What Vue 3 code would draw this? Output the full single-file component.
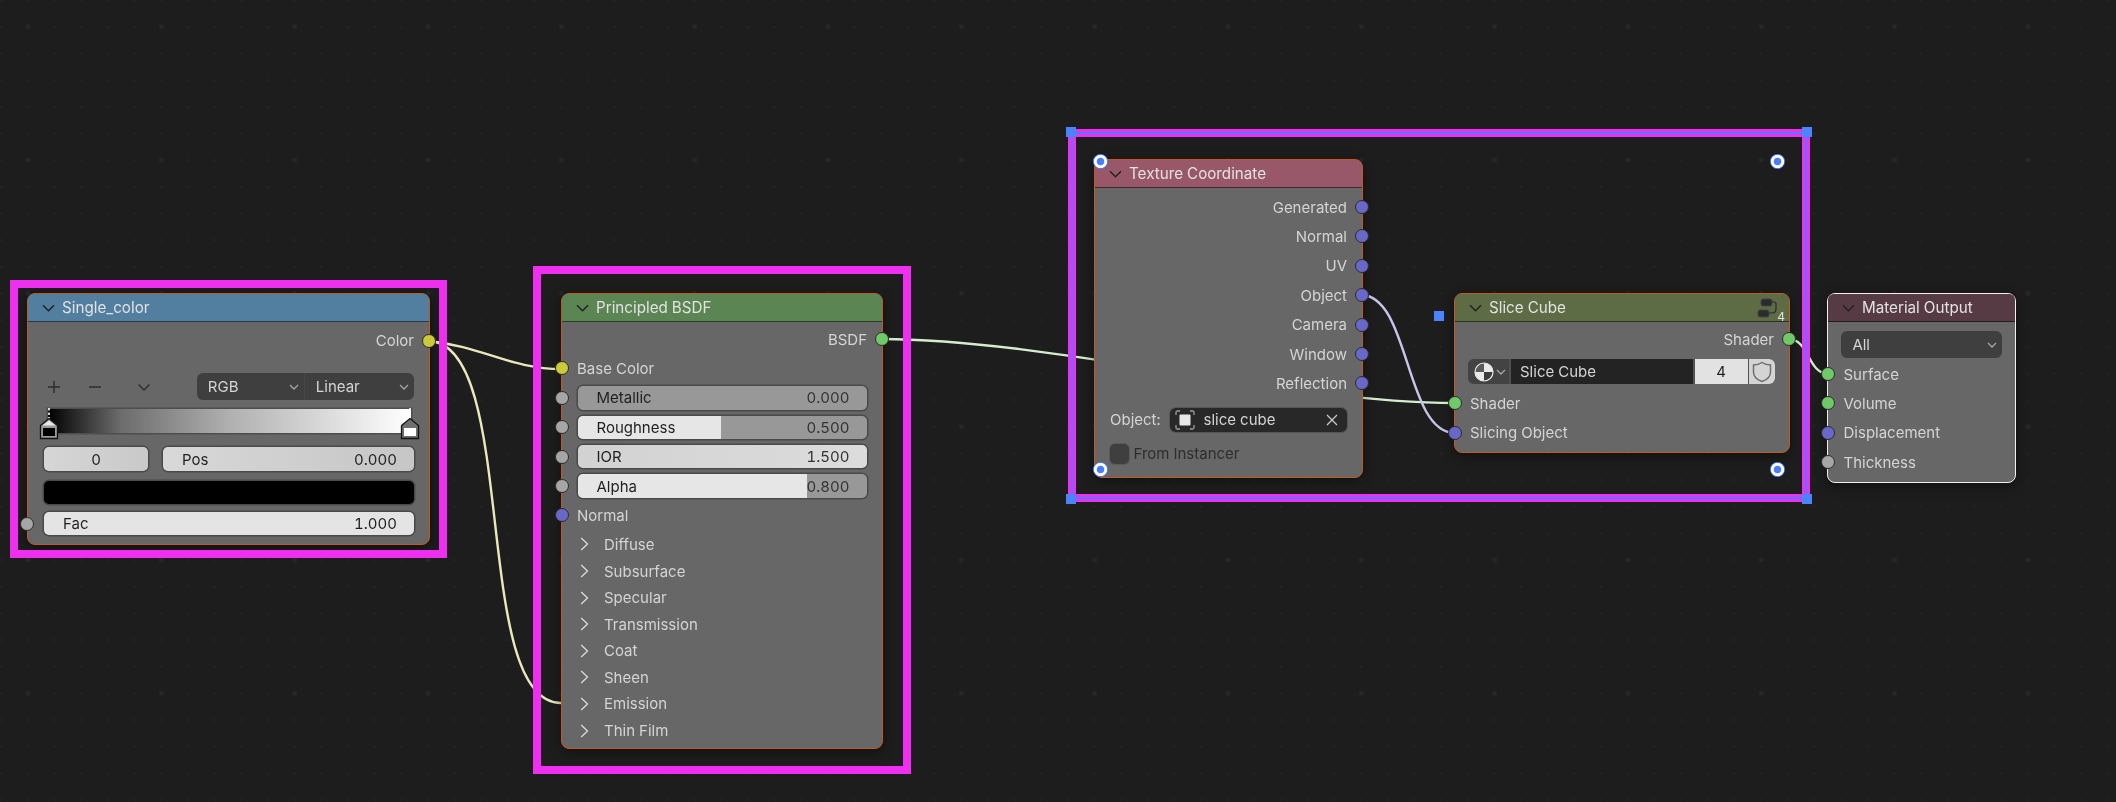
<script setup>
const principledSliders = [
  { label: 'Metallic', value: '0.000', fill: 0, kind: 'slider' },
  { label: 'Roughness', value: '0.500', fill: 49.5, kind: 'slider' },
  { label: 'IOR', value: '1.500', fill: 100, kind: 'solid' },
  { label: 'Alpha', value: '0.800', fill: 79.5, kind: 'slider' },
]
const panels = ['Diffuse', 'Subsurface', 'Specular', 'Transmission', 'Coat', 'Sheen', 'Emission', 'Thin Film']
const texOutputs = ['Generated', 'Normal', 'UV', 'Object', 'Camera', 'Window', 'Reflection']
const outputInputs = [
  { label: 'Surface', type: 'shader' },
  { label: 'Volume', type: 'shader' },
  { label: 'Displacement', type: 'vector' },
  { label: 'Thickness', type: 'value' },
]
</script>

<template>
  <div class="canvas">
    <svg class="links" width="2116" height="802" viewBox="0 0 2116 802" fill="none">
      <path class="link yellow" d="M428 341 C482 346 510 369 562 369" />
      <path class="link yellow" d="M428 341 C520 341 470 703 561 703" />
      <path class="link green" d="M881 339 C1050 339 1290 403 1455 403" />
      <path class="link lilac" d="M1361 295 C1410 295 1405 433 1455 433" />
      <path class="link green" d="M1788 339 C1810 339 1807 374 1829 374" />
    </svg>

    <!-- Single_color -->
    <section class="node n-single">
      <header class="head h-blue">
        <svg class="chev" width="13" height="8" viewBox="0 0 13 8"><path d="M1 1.2 L6.5 6.7 L12 1.2" /></svg>
        <span>Single_color</span>
      </header>
      <div class="body single-body">
        <div class="row out single-color-row">
          <span>Color</span><i class="sock yellow-s right"></i>
        </div>
        <div class="ramp-tools">
          <svg class="tool" width="14" height="14" viewBox="0 0 14 14"><path d="M7 1 V13 M1 7 H13" /></svg>
          <svg class="tool t-minus" width="14" height="14" viewBox="0 0 14 14"><path d="M1 7 H13" /></svg>
          <svg class="tool t-chev" width="14" height="14" viewBox="0 0 14 14"><path d="M1.5 4.5 L7 10 L12.5 4.5" /></svg>
          <div class="combo">
            <div class="combo-cell c-rgb"><span>RGB</span><svg class="mini" width="10" height="6" viewBox="0 0 10 6"><path d="M1 1 L5 5 L9 1" /></svg></div>
            <div class="combo-cell c-lin"><span>Linear</span><svg class="mini" width="10" height="6" viewBox="0 0 10 6"><path d="M1 1 L5 5 L9 1" /></svg></div>
          </div>
        </div>
        <div class="ramp">
          <svg class="stop s-left" width="20" height="32" viewBox="0 0 20 32">
            <path class="dash" d="M10 0 V12" />
            <path d="M1.5 30.5 V17.5 L10 10.5 L18.5 17.5 V30.5 Z" fill="#9a9a9a" stroke="#111" stroke-width="1.3" />
            <path d="M3.5 17.5 L10 12.5 L16.5 17.5 Z" fill="#e8e8e8" />
            <rect x="4" y="20" width="12" height="8" fill="#000" />
          </svg>
          <svg class="stop s-right" width="20" height="32" viewBox="0 0 20 32">
            <path class="dash" d="M10 0 V12" />
            <path d="M1.5 30.5 V17.5 L10 10.5 L18.5 17.5 V30.5 Z" fill="#6f6f6f" stroke="#111" stroke-width="1.3" />
            <rect x="4" y="20" width="12" height="8" fill="#fff" />
          </svg>
        </div>
        <div class="ramp-fields">
          <div class="field f-index">0</div>
          <div class="field f-pos"><span>Pos</span><span>0.000</span></div>
        </div>
        <div class="swatch"></div>
        <div class="fac-row">
          <i class="sock grey-s left"></i>
          <div class="field f-fac"><span>Fac</span><span>1.000</span></div>
        </div>
      </div>
    </section>

    <!-- Principled BSDF -->
    <section class="node n-principled">
      <header class="head h-green">
        <svg class="chev" width="13" height="8" viewBox="0 0 13 8"><path d="M1 1.2 L6.5 6.7 L12 1.2" /></svg>
        <span>Principled BSDF</span>
      </header>
      <div class="body principled-body">
        <div class="row out"><span>BSDF</span><i class="sock green-s right"></i></div>
        <div class="row in"><i class="sock yellow-s left"></i><span>Base Color</span></div>
        <div v-for="s in principledSliders" :key="s.label" class="row in slider-row">
          <i class="sock grey-s left"></i>
          <div class="field slider" :class="s.kind">
            <div class="fill" :style="{ width: s.fill + '%' }"></div>
            <span>{{ s.label }}</span><span class="val">{{ s.value }}</span>
          </div>
        </div>
        <div class="row in"><i class="sock blue-s left"></i><span>Normal</span></div>
        <div class="panels">
          <div v-for="p in panels" :key="p" class="panel">
            <svg class="arrow" width="9" height="14" viewBox="0 0 9 14"><path d="M1.2 1 L7.5 7 L1.2 13" /></svg>
            <span>{{ p }}</span>
          </div>
        </div>
      </div>
    </section>

    <!-- Texture Coordinate -->
    <section class="node n-tex">
      <header class="head h-rose">
        <svg class="chev" width="13" height="8" viewBox="0 0 13 8"><path d="M1 1.2 L6.5 6.7 L12 1.2" /></svg>
        <span>Texture Coordinate</span>
      </header>
      <div class="body tex-body">
        <div v-for="o in texOutputs" :key="o" class="row out"><span>{{ o }}</span><i class="sock blue-s right"></i></div>
        <div class="object-row">
          <span>Object:</span>
          <div class="object-field">
            <svg width="20" height="20" viewBox="0 0 20 20" fill="none">
              <rect x="4.5" y="4.5" width="11" height="11" rx="1" fill="#e6e6e6" />
              <path d="M1 5 V2.5 Q1 1 2.5 1 H5 M15 1 H17.5 Q19 1 19 2.5 V5 M19 15 V17.5 Q19 19 17.5 19 H15 M5 19 H2.5 Q1 19 1 17.5 V15" stroke="#9d9d9d" stroke-width="1.3" />
            </svg>
            <span class="obj-name">slice cube</span>
            <svg class="x" width="12" height="12" viewBox="0 0 12 12"><path d="M1 1 L11 11 M11 1 L1 11" /></svg>
          </div>
        </div>
        <div class="check-row">
          <div class="check"></div>
          <span>From Instancer</span>
        </div>
      </div>
    </section>

    <!-- Slice Cube -->
    <section class="node n-slice">
      <header class="head h-olive">
        <svg class="chev" width="13" height="8" viewBox="0 0 13 8"><path d="M1 1.2 L6.5 6.7 L12 1.2" /></svg>
        <span>Slice Cube</span>
        <div class="group-badge">
          <svg width="26" height="22" viewBox="0 0 26 22" fill="none">
            <rect x="4" y="1" width="11" height="7" rx="2" fill="#2b2b2b" stroke="#444" />
            <rect x="1" y="12" width="11" height="7" rx="2" fill="#2b2b2b" stroke="#444" />
            <path d="M15 4 H17 Q19 4 19 6 V11 Q19 15 15 15 H12" stroke="#2b2b2b" stroke-width="1.2" />
          </svg>
          <span>4</span>
        </div>
      </header>
      <div class="body slice-body">
        <div class="row out"><span>Shader</span><i class="sock green-s right"></i></div>
        <div class="group-row">
          <div class="g-icon">
            <svg width="20" height="20" viewBox="0 0 20 20">
              <circle cx="10" cy="10" r="9" fill="#eaeaea" />
              <path d="M10 10 V1 A9 9 0 0 0 1 10 Z" fill="#5a5a5a" />
              <path d="M10 10 V19 A9 9 0 0 0 19 10 Z" fill="#3c3c3c" />
              <circle cx="10" cy="10" r="9" fill="none" stroke="#eaeaea" stroke-width="1.2" />
            </svg>
            <svg class="mini" width="10" height="6" viewBox="0 0 10 6"><path d="M1 1 L5 5 L9 1" /></svg>
          </div>
          <div class="g-name">Slice Cube</div>
          <div class="g-count">4</div>
          <div class="g-shield">
            <svg width="20" height="22" viewBox="0 0 20 22" fill="none"><path d="M10 1.5 C13 3.5 16 4 18.5 4 V11 C18.5 15.5 14.5 19 10 20.5 C5.5 19 1.5 15.5 1.5 11 V4 C4 4 7 3.5 10 1.5 Z" stroke="#6f6f6f" stroke-width="1.5" /></svg>
          </div>
        </div>
        <div class="row in slice-in"><i class="sock green-s left"></i><span>Shader</span></div>
        <div class="row in"><i class="sock blue-s left"></i><span>Slicing Object</span></div>
      </div>
    </section>

    <!-- Material Output -->
    <section class="node n-output">
      <header class="head h-plum">
        <svg class="chev" width="13" height="8" viewBox="0 0 13 8"><path d="M1 1.2 L6.5 6.7 L12 1.2" /></svg>
        <span>Material Output</span>
      </header>
      <div class="body output-body">
        <div class="select"><span>All</span><svg class="mini" width="10" height="6" viewBox="0 0 10 6"><path d="M1 1 L5 5 L9 1" /></svg></div>
        <div v-for="i in outputInputs" :key="i.label" class="row in">
          <i class="sock left" :class="{ 'green-s': i.type === 'shader', 'blue-s': i.type === 'vector', 'grey-s': i.type === 'value' }"></i>
          <span>{{ i.label }}</span>
        </div>
      </div>
    </section>

    <!-- Selection frames -->
    <div class="frame f-a"></div>
    <div class="frame f-b"></div>
    <div class="frame f-c">
      <div class="blue-line"></div>
      <b class="corner tl"></b><b class="corner tr"></b><b class="corner bl"></b><b class="corner br"></b>
    </div>
    <b class="pin p1"></b><b class="pin p2"></b><b class="pin p3"></b><b class="pin p4"></b>
    <b class="blue-dot"></b>
  </div>
</template>

<style>
html, body { margin: 0; background: #1d1d1d; }
</style>

<style scoped>
.canvas {
  position: relative;
  width: 2116px;
  height: 802px;
  overflow: hidden;
  background-color: #1d1d1d;
  background-image:
    radial-gradient(circle, #292929 0, #272727 1.5px, transparent 3.2px),
    radial-gradient(circle, #242424 0, #232323 0.8px, transparent 1.8px);
  background-size: 133.33px 133.33px, 26.667px 26.667px;
  background-position: -38.67px -40px, -12px -13px;
  font-family: Inter, "Noto Sans", sans-serif;
  font-size: 15px;
  font-variant-numeric: tabular-nums;
  color: #d4d4d4;
  filter: blur(0.3px);
}
.links { position: absolute; left: 0; top: 0; z-index: 1; }
.link { stroke-width: 2.4; stroke-linecap: round; }
.link.yellow { stroke: #e8e8bc; }
.link.green { stroke: #d6eccf; }
.link.lilac { stroke: #c9c5ea; }

.node {
  position: absolute;
  z-index: 2;
  box-sizing: border-box;
  border: 1.6px solid #c4581f;
  border-radius: 8px;
  background: #676767;
  box-shadow: 0 3px 12px rgba(0, 0, 0, 0.45);
}
.n-single { left: 27px; top: 293px; width: 403px; height: 252px; }
.n-principled { left: 561px; top: 293px; width: 322px; height: 456px; }
.n-tex { left: 1094px; top: 159px; width: 269px; height: 319px; }
.n-slice { left: 1454px; top: 293px; width: 336px; height: 160px; }
.n-output { left: 1827px; top: 293px; width: 189px; height: 190px; border-color: #f0f0f0; }

.head {
  display: flex;
  align-items: center;
  box-sizing: border-box;
  height: 28px;
  padding: 0 0 0 14px;
  gap: 7px;
  border-radius: 6px 6px 0 0;
  border-bottom: 1.5px solid rgba(0, 0, 0, 0.55);
  color: #e2e2e2;
  font-size: 15.2px;
}
.h-blue { background: #527f9f; }
.h-green { background: #5b8552; }
.h-rose { background: #98586a; }
.h-olive { background: #5d6c44; position: relative; }
.h-plum { background: #573b44; }
.chev { flex: none; fill: none; stroke: #222; stroke-width: 1.5; }

.row {
  position: relative;
  display: flex;
  align-items: center;
  height: 29.4px;
  box-sizing: border-box;
}
.row.out { justify-content: flex-end; padding-right: 15px; }
.row.in { padding-left: 15px; }

.sock {
  position: absolute;
  top: 50%;
  width: 14px;
  height: 14px;
  margin-top: -7px;
  box-sizing: border-box;
  border: 1.2px solid #2b2b2b;
  border-radius: 50%;
  z-index: 3;
}
.sock.left { left: -7.5px; }
.sock.right { right: -6.5px; }
.yellow-s { background: #cbcb3a; }
.green-s { background: #6fc968; }
.blue-s { background: #6868c9; }
.grey-s { background: #a6a6a6; }

.field {
  position: relative;
  display: flex;
  align-items: center;
  justify-content: space-between;
  box-sizing: border-box;
  height: 24px;
  padding: 0 17px 0 19px;
  border-radius: 5px;
  color: #1f1f1f;
  background: #d6d6d6;
  box-shadow: 0 0 0 1.5px #4a4a4a;
  overflow: hidden;
}
.field span { position: relative; }

/* Single color */
.single-body { display: flex; flex-direction: column; padding: 0 15px 0 16px; }
.single-color-row { margin: 4px -15px 0 -16px; padding-right: 15px; }
.ramp-tools { display: flex; align-items: center; margin-top: 18px; height: 27px; }
.tool { flex: none; fill: none; stroke: #2e2e2e; stroke-width: 1.5; margin-left: 2.8px; }
.t-minus { margin-left: 27px; }
.t-chev { margin-left: 35px; }
.combo { display: flex; margin-left: 46px; width: 218px; height: 27px; border-radius: 6px; overflow: hidden; background: #3f3f3f; }
.combo-cell { display: flex; align-items: center; justify-content: space-between; box-sizing: border-box; padding: 0 5px 0 11px; }
.c-rgb { width: 108px; border-right: 1px solid #454545; }
.c-lin { flex: 1; }
.mini { flex: none; fill: none; stroke: #a5a5a5; stroke-width: 1.3; }
.ramp {
  position: relative;
  margin: 8.5px 3px 0 4.4px;
  height: 24px;
  background: linear-gradient(90deg, #000 0%, #6c6c6c 20%, #b0b0b0 50%, #e0e0e0 80%, #fff 100%);
  box-shadow: 0 0 0 1.5px #4e4e4e;
}
.stop { position: absolute; top: -1px; z-index: 2; }
.s-left { left: -9.5px; }
.s-right { right: -9px; }
.dash { stroke: #fff; stroke-width: 1.6; stroke-dasharray: 2.5 2; }
.ramp-fields { display: flex; gap: 15px; margin-top: 14.5px; }
.f-index { width: 104px; justify-content: center; padding: 0; background: linear-gradient(90deg, #d6d6d6, #c9c9c9); }
.f-pos { flex: 1; background: linear-gradient(90deg, #d8d8d8, #c6c6c6); }
.swatch { margin-top: 10px; height: 23px; border-radius: 5px; background: #000; box-shadow: 0 0 0 1.5px #4a4a4a; }
.fac-row { position: relative; margin-top: 8px; }
.fac-row .sock { left: -23.6px; }
.f-fac { height: 23px; background: #e4e4e4; }

/* Principled */
.principled-body { padding-top: 2.4px; }
.row.in.slider-row { padding: 0 15.5px; }
.slider { flex: 1; height: 23.5px; background: #989898; }
.slider.solid { background: linear-gradient(90deg, #d2d2d2, #dcdcdc); }
.slider .fill { position: absolute; left: 0; top: 0; bottom: 0; background: #e6e6e6; }
.slider.solid .fill { display: none; }
.val { color: #333; }
.panels { margin-top: 1px; }
.panel { display: flex; align-items: center; height: 26.6px; padding-left: 18px; gap: 15px; }
.arrow { flex: none; fill: none; stroke: #dcdcdc; stroke-width: 1.3; }

/* Texture coordinate */
.tex-body { padding-top: 4.4px; }
.object-row { display: flex; align-items: center; gap: 9px; margin: 9.5px 15px 0 15px; height: 24px; }
.object-field {
  display: flex;
  align-items: center;
  flex: 1;
  height: 24px;
  box-sizing: border-box;
  padding: 0 9px 0 5px;
  border-radius: 6px;
  background: #282828;
  box-shadow: 0 0 0 1px #555;
  gap: 9px;
}
.obj-name { flex: 1; }
.x { fill: none; stroke: #c9c9c9; stroke-width: 1.3; }
.check-row { display: flex; align-items: center; gap: 5px; margin: 12px 0 0 14.5px; color: #2e2e2e; }
.check { width: 19px; height: 20px; border-radius: 5px; background: #3f3f3f; box-shadow: 0 0 0 1px #5a5a5a; }

/* Slice cube */
.group-badge { position: absolute; right: 2px; top: 3.5px; display: flex; align-items: flex-end; }
.group-badge svg { margin-right: -4px; }
.group-badge span { position: relative; top: 4px; left: -2px; font-size: 12px; line-height: 14px; margin-top: 8px; color: #e0e0e0; }
.slice-body { padding-top: 2.4px; }
.group-row {
  display: flex;
  margin: 5.6px 14.5px 0 12.5px;
  height: 25px;
  gap: 2px;
  border-radius: 6px;
  overflow: hidden;
  background: #505050;
}
.g-icon { display: flex; align-items: center; justify-content: space-between; box-sizing: border-box; width: 41px; padding: 0 3px 0 6px; background: #434343; }
.g-name { display: flex; align-items: center; flex: 1; padding-left: 9.5px; background: #232323; }
.g-count { display: flex; align-items: center; justify-content: center; width: 53px; background: #e2e2e2; color: #1f1f1f; }
.g-shield { display: flex; align-items: center; justify-content: center; width: 26px; margin-left: -1px; background: #d4d4d4; }
.slice-in { margin-top: 4.4px; }

/* Material output */
.output-body { padding-top: 9px; }
.select {
  display: flex;
  align-items: center;
  justify-content: space-between;
  box-sizing: border-box;
  height: 27px;
  margin: 0 13px 1.4px 13.4px;
  padding: 0 5px 0 11px;
  border-radius: 6px;
  background: #3f3f3f;
}
.output-body .row.in { padding-left: 15.5px; }

/* Frames */
.frame { position: absolute; z-index: 4; box-sizing: border-box; border: 8.6px solid #ee2ff0; }
.f-a { left: 10px; top: 280px; width: 437px; height: 278px; }
.f-b { left: 533px; top: 266px; width: 378px; height: 508px; }
.f-c { left: 1068px; top: 129px; width: 742px; height: 373px; }
.blue-line { position: absolute; inset: -5.3px; border: 2px solid #4a7dff; }
.corner { position: absolute; width: 10px; height: 10px; background: #4a84ff; }
.tl { left: -9.6px; top: -9.6px; }
.tr { right: -9.6px; top: -9.6px; }
.bl { left: -9.6px; bottom: -9.6px; }
.br { right: -9.6px; bottom: -9.6px; }
.pin {
  position: absolute;
  z-index: 5;
  width: 15px;
  height: 15px;
  box-sizing: border-box;
  border-radius: 50%;
  background: radial-gradient(circle, #4a7dff 0, #4a7dff 3.4px, #fff 4.2px, #fff 6.2px, #4a7dff 7px);
}
.p1 { left: 1093px; top: 154px; }
.p2 { left: 1093px; top: 461.5px; }
.p3 { left: 1770px; top: 461.5px; }
.p4 { left: 1770px; top: 154px; }
.blue-dot { position: absolute; z-index: 5; left: 1434px; top: 311px; width: 10px; height: 10px; background: #4a84ff; }
</style>
